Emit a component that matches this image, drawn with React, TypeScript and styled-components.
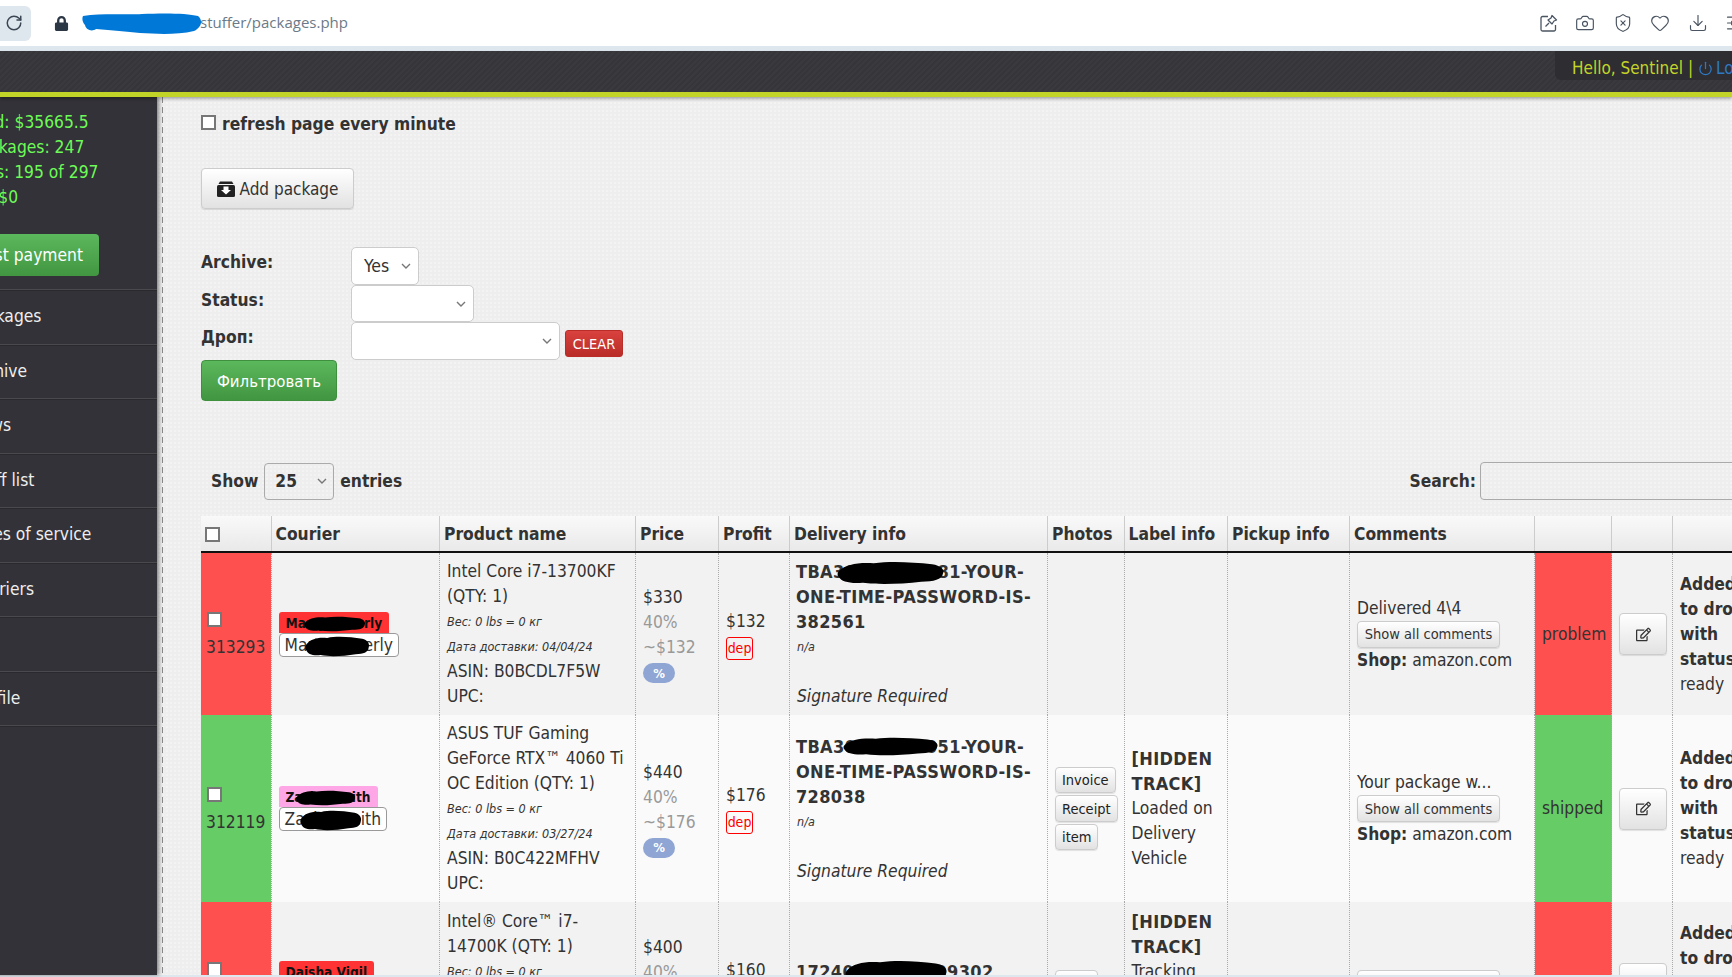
import React from 'react';
import styled, { createGlobalStyle } from 'styled-components';
import { Camera, Download, Heart, Power, RotateCw, ShieldX, SlidersHorizontal } from 'lucide-react';
import { FaLock, FaRegEdit } from 'react-icons/fa';

const chevron =
  "url(\"data:image/svg+xml,%3Csvg xmlns='http://www.w3.org/2000/svg' width='10' height='6' viewBox='0 0 10 6'%3E%3Cpath d='M1 1l4 4 4-4' fill='none' stroke='%23777' stroke-width='1.4'/%3E%3C/svg%3E\")";

const Global = createGlobalStyle`
  html, body {
    margin: 0;
    padding: 0;
    overflow: hidden;
  }
  body {
    font-family: "DejaVu Sans Condensed", "DejaVu Sans", sans-serif;
    font-stretch: condensed;
    font-size: 17.3px;
    line-height: 25px;
    color: #333;
  }
  button, select, input {
    font-family: inherit;
    font-stretch: inherit;
  }
`;

const Screen = styled.div`
  width: 1732px;
  height: 977px;
  display: flex;
  flex-direction: column;
  overflow: hidden;
  background: #fff;
`;

const BrowserBar = styled.div`
  height: 46px;
  flex: none;
  display: flex;
  align-items: center;
  background: #fff;
  border-bottom: 5px solid #dfe7ee;
`;

const ReloadButton = styled.div`
  width: 31px;
  height: 35px;
  display: flex;
  align-items: center;
  justify-content: center;
  padding-right: 3px;
  box-sizing: border-box;
  background: #dfe7ee;
  border-radius: 0 6px 6px 0;
  color: #3b4754;
`;

const LockIcon = styled.div`
  margin-left: 23px;
  display: flex;
  color: #2c3745;
`;

const UrlBox = styled.div`
  position: relative;
  margin-left: 13px;
  padding-left: 118px;
  margin-top: -2px;
  font-family: "Open Sans", sans-serif;
  font-stretch: normal;
  font-size: 15px;
  color: #6b7a88;
`;

const UrlScribble = styled.svg`
  position: absolute;
  left: 0;
  top: 3px;
`;

const BrowserTools = styled.div`
  margin-left: auto;
  margin-right: -13px;
  display: flex;
  align-items: center;
  gap: 17.5px;
  color: #4a5561;
`;

const Header = styled.div`
  height: 41px;
  flex: none;
  display: flex;
  justify-content: flex-end;
  align-items: flex-start;
  background: repeating-linear-gradient(135deg, #36353a 0 2px, #3a393e 2px 4px);
  border-bottom: 5px solid #c3d429;
  box-shadow: 0 2px 3px rgba(0, 0, 0, 0.3);
  position: relative;
  z-index: 2;
`;

const HelloBox = styled.div`
  width: 177px;
  height: 29px;
  flex: none;
  box-sizing: border-box;
  padding: 5px 0 0 17px;
  display: flex;
  align-items: center;
  gap: 5px;
  white-space: nowrap;
  overflow: hidden;
  background: #2e2d31;
  border-radius: 0 0 0 6px;
  color: #c3d429;
  font-size: 17px;
`;

const LogoutLink = styled.span`
  display: inline-flex;
  align-items: center;
  gap: 3px;
  color: #2f78c4;
`;

const Body = styled.div`
  flex: 1;
  min-height: 0;
  display: flex;
`;

const Sidebar = styled.aside`
  width: 188px;
  margin-left: -31px;
  flex: none;
  box-sizing: border-box;
  padding-top: 13px;
  background: #333238;
  box-shadow: 2px 0 4px rgba(0, 0, 0, 0.45);
  position: relative;
  z-index: 1;
`;

const Stat = styled.div`
  padding-left: 3px;
  color: #6dfb57;
  white-space: nowrap;
`;

const PaymentButton = styled.div`
  width: 130px;
  height: 42px;
  margin: 24px 0 13px;
  display: flex;
  align-items: center;
  justify-content: flex-end;
  padding-right: 16px;
  box-sizing: border-box;
  white-space: nowrap;
  color: #fff;
  background: linear-gradient(#5cb85c, #419641);
  border-radius: 0 4px 4px 0;
`;

const NavItem = styled.div<{ $indent?: number }>`
  height: 54.5px;
  box-sizing: border-box;
  padding-left: ${(p) => p.$indent ?? 0}px;
  border-top: 1px solid #4a494e;
  box-shadow: inset 0 1px 0 #2a292d;
  display: flex;
  align-items: center;
  color: #eee;
  white-space: nowrap;
`;

const Main = styled.main`
  flex: 1;
  min-width: 0;
  padding-left: 5px;
  overflow: hidden;
  background-color: #eeeeee;
  background-image: radial-gradient(#f3f3f3 1px, transparent 1.2px);
  background-size: 4px 4px;
`;

const Content = styled.div`
  width: 1571px;
  height: 100%;
  padding-left: 39px;
  background: linear-gradient(#8a8a8a 60%, transparent 60%) left top / 1px 10px repeat-y;
`;

const RefreshRow = styled.label`
  height: 25px;
  padding-top: 15px;
  display: flex;
  align-items: center;
  gap: 6px;
  font-weight: 700;
`;

const Check = styled.input.attrs({ type: 'checkbox' })`
  appearance: none;
  display: block;
  width: 15px;
  height: 15px;
  margin: 0;
  background: #fff;
  border: 2px solid #777;
  box-sizing: border-box;
`;

const RefreshCheck = styled(Check)`
  margin-top: -4px;
`;

const GreyButton = styled.button`
  display: inline-flex;
  align-items: center;
  justify-content: center;
  box-sizing: border-box;
  padding: 0 8px;
  color: #333;
  font-size: 16px;
  background: linear-gradient(#fff, #e2e2e2);
  border: 1px solid #ccc;
  border-radius: 4px;
  box-shadow: 0 1px 1px rgba(0, 0, 0, 0.1);
`;

const AddButton = styled(GreyButton)`
  width: 153px;
  height: 41px;
  margin-top: 31px;
  gap: 5px;
  font-size: 17px;
`;

const FilterGrid = styled.div`
  margin-top: 38px;
  display: grid;
  grid-template-columns: 150px 1fr;
`;

const FilterLabel = styled.div`
  padding-top: 3px;
  font-weight: 700;
`;

const FilterControls = styled.div`
  display: flex;
  align-items: flex-end;
  gap: 5px;
`;

const Select = styled.select<{ $width: number; $height?: number }>`
  appearance: none;
  width: ${(p) => p.$width}px;
  height: ${(p) => p.$height ?? 37}px;
  padding: 0 12px;
  color: #333;
  font-size: 17.5px;
  background: #fff ${chevron} no-repeat right 7px center;
  border: 1px solid #ccc;
  border-radius: 5px;
`;

const ClearButton = styled.button`
  width: 58px;
  height: 27px;
  margin-bottom: 3px;
  padding: 0;
  color: #fff;
  font-size: 14.5px;
  background: linear-gradient(#d9423e, #b92c28);
  border: 1px solid #b92c28;
  border-radius: 3px;
`;

const FilterButton = styled.button`
  display: block;
  width: 136px;
  height: 41px;
  padding: 0;
  color: #fff;
  font-size: 16.7px;
  background: linear-gradient(#5cb85c, #419641);
  border: 1px solid #3e8f3e;
  border-radius: 4px;
`;

const EntriesRow = styled.div`
  margin-top: 61px;
  height: 38px;
  display: flex;
  align-items: center;
  padding-left: 10px;
  gap: 6px;
  font-weight: 700;
`;

const EntriesSelect = styled.select`
  appearance: none;
  width: 70px;
  height: 37px;
  padding: 0 10px;
  color: #333;
  font-size: 17.3px;
  font-weight: 700;
  background: transparent ${chevron} no-repeat right 6px center;
  border: 1px solid #aaa;
  border-radius: 4px;
`;

const SearchLabel = styled.span`
  margin-left: auto;
  margin-right: -2px;
`;

const SearchInput = styled.input`
  width: 292px;
  height: 38px;
  box-sizing: border-box;
  background: transparent;
  border: 1px solid #aaa;
  border-radius: 4px;
`;

const Table = styled.table`
  margin-top: 16px;
  width: 1571px;
  table-layout: fixed;
  border-collapse: collapse;
`;

const HeadCell = styled.th`
  height: 34px;
  padding: 1px 4px 0;
  text-align: left;
  font-weight: 700;
  background: linear-gradient(#f9f9f9, #e9e9e9);
  border-right: 1px solid #ccc;
  border-bottom: 2px solid #111;
  white-space: nowrap;
`;

const Row = styled.tr<{ $height: number; $odd: boolean }>`
  height: ${(p) => p.$height}px;
  background: ${(p) => (p.$odd ? '#f2f2f2' : '#fafafa')};
`;

const Cell = styled.td<{ $tone?: string }>`
  padding: 0 7px;
  vertical-align: middle;
  border-right: 1px dotted #aaa;
  background: ${(p) => p.$tone ?? 'transparent'};
`;

const IdBlock = styled.div`
  padding-top: 4px;
  display: flex;
  flex-direction: column;
  gap: 8px;
  margin-left: -1px;
`;

const IdNumber = styled.div`
  margin-left: -1px;
`;

const CourierTag = styled.div<{ $color: string }>`
  position: relative;
  width: fit-content;
  height: 21px;
  padding: 0 7px;
  font-size: 13.6px;
  line-height: 22px;
  font-weight: 700;
  white-space: nowrap;
  color: #111;
  background: ${(p) => p.$color};
  border-radius: 3px 3px 0 0;
`;

const CourierName = styled.div`
  position: relative;
  width: fit-content;
  height: 24px;
  box-sizing: border-box;
  padding: 0 5px;
  line-height: 23px;
  white-space: nowrap;
  background: #fff;
  border: 1px solid #999;
  border-radius: 4px;
`;

const Blot = styled.svg<{ $x: number; $y: number }>`
  position: absolute;
  left: ${(p) => p.$x}px;
  top: ${(p) => p.$y}px;
`;

const Small = styled.div`
  font-size: 12.5px;
  font-style: italic;
`;

const Faded = styled.div`
  color: #999;
`;

const PercentPill = styled.div`
  width: 32px;
  height: 20px;
  margin-top: 3px;
  display: flex;
  align-items: center;
  justify-content: center;
  color: #fff;
  font-size: 13px;
  font-weight: 700;
  background: #8fa5d3;
  border-radius: 10px;
`;

const DepBadge = styled.div`
  width: 27px;
  height: 23px;
  margin-top: 3px;
  box-sizing: border-box;
  color: #f00;
  font-size: 14px;
  line-height: 21px;
  text-align: center;
  border: 1px solid #f00;
  border-radius: 3px;
`;

const TrackCode = styled.div`
  position: relative;
  margin-left: -1px;
  font-size: 18px;
  letter-spacing: 0.35px;
  font-weight: 700;
`;

const Signature = styled.div`
  margin-top: 25px;
  font-style: italic;
`;

const PhotoStack = styled.div`
  display: flex;
  flex-direction: column;
  align-items: flex-start;
  gap: 2px;
`;

const PhotoButton = styled(GreyButton)`
  height: 26.5px;
  padding: 0 6px;
  color: #222;
  font-size: 14.5px;
`;

const HiddenTrack = styled.div`
  font-size: 18px;
  letter-spacing: 0.35px;
  font-weight: 700;
`;

const CommentsButton = styled(GreyButton)`
  width: 143px;
  height: 27px;
  padding: 0;
  font-size: 14.5px;
`;

const EditButton = styled(GreyButton)`
  width: 48px;
  height: 42px;
  padding: 0;
`;

const AddedNote = styled.div`
  width: 66px;
  font-weight: 700;
`;

const BottomStrip = styled.div`
  height: 2px;
  flex: none;
  background: #dfe7ee;
`;

const blotPath = 'M2 9C8 3 20 1 34 2C50 0 70 1 88 3C96 4 100 8 98 12C97 17 90 19 78 19C60 21 40 22 24 20C12 21 4 19 2 15C0 13 0 11 2 9Z';

type BlotBox = { x: number; y: number; w: number; h: number };

const Scribble = ({ x, y, w, h }: BlotBox) => (
  <Blot $x={x} $y={y} width={w} height={h} viewBox="0 0 100 22" preserveAspectRatio="none">
    <path d={blotPath} fill="#000" />
  </Blot>
);

const ArchiveIcon = () => (
  <svg width="18" height="16" viewBox="0 0 18 16">
    <path d="M3 0.5H15L16.5 3H1.5Z" fill="#222" />
    <rect x="0" y="4" width="18" height="12" rx="1.5" fill="#222" />
    <path d="M6.5 5.5H11.5V9H14L9 13.5L4 9H6.5Z" fill="#fff" />
  </svg>
);

const PinEditIcon = () => (
  <svg width="18" height="18" viewBox="0 0 18 18" fill="none" stroke="currentColor" strokeWidth="1.3" strokeLinejoin="round">
    <path d="M8 2.5H2.5A1.5 1.5 0 0 0 1 4V15.5A1.5 1.5 0 0 0 2.5 17H14A1.5 1.5 0 0 0 15.5 15.5V11" />
    <path d="M12 1.5L16.5 6L14 7L12 10L8 6L11 4ZM9 9L5.5 12.5" />
  </svg>
);

const columns = [
  { title: '', width: 70 },
  { title: 'Courier', width: 168.5 },
  { title: 'Product name', width: 196 },
  { title: 'Price', width: 83 },
  { title: 'Profit', width: 71 },
  { title: 'Delivery info', width: 258 },
  { title: 'Photos', width: 76.5 },
  { title: 'Label info', width: 103.5 },
  { title: 'Pickup info', width: 122 },
  { title: 'Comments', width: 185 },
  { title: '', width: 77 },
  { title: '', width: 61 },
  { title: '', width: 99 },
];

const RED = '#ff5050';
const GREEN = '#66cc66';

type Pack = {
  id: string;
  height: number;
  tone: string;
  tagColor: string;
  name: string;
  tagBlot?: BlotBox;
  nameBlot?: BlotBox;
  product: string;
  date: string;
  asin: string;
  price: string;
  profit: string;
  percentPrice: string;
  code: string;
  codeBlot: BlotBox;
  signature: boolean;
  photos: string[];
  trackState?: string;
  comment?: string;
  shop: boolean;
  status: string;
};

const packs: Pack[] = [
  {
    id: '313293',
    height: 163,
    tone: RED,
    tagColor: '#ff3333',
    name: 'Marty Beverly',
    tagBlot: { x: 25, y: 4, w: 62, h: 16 },
    nameBlot: { x: 25, y: 2, w: 65, h: 21 },
    product: 'Intel Core i7-13700KF (QTY: 1)',
    date: '04/04/24',
    asin: 'B0BCDL7F5W',
    price: '$330',
    profit: '$132',
    percentPrice: '~$132',
    code: 'TBA30000000081-YOUR-ONE-TIME-PASSWORD-IS-382561',
    codeBlot: { x: 41, y: 2, w: 108, h: 24 },
    signature: true,
    photos: [],
    comment: 'Delivered 4\\4',
    shop: true,
    status: 'problem',
  },
  {
    id: '312119',
    height: 187,
    tone: GREEN,
    tagColor: '#ffa6e6',
    name: 'Zacky Smith',
    tagBlot: { x: 17, y: 4, w: 60, h: 16 },
    nameBlot: { x: 20, y: 2, w: 62, h: 21 },
    product: 'ASUS TUF Gaming GeForce RTX™ 4060 Ti OC Edition (QTY: 1)',
    date: '03/27/24',
    asin: 'B0C422MFHV',
    price: '$440',
    profit: '$176',
    percentPrice: '~$176',
    code: 'TBA30000000051-YOUR-ONE-TIME-PASSWORD-IS-728038',
    codeBlot: { x: 47, y: 3, w: 96, h: 19 },
    signature: true,
    photos: ['Invoice', 'Receipt', 'item'],
    trackState: 'Loaded on Delivery Vehicle',
    comment: 'Your package w...',
    shop: true,
    status: 'shipped',
  },
  {
    id: '311874',
    height: 163,
    tone: RED,
    tagColor: '#ff3333',
    name: 'Daisha Vigil',
    product: 'Intel® Core™ i7-14700K (QTY: 1)',
    date: '03/30/24',
    asin: 'B0CGJDKLB8',
    price: '$400',
    profit: '$160',
    percentPrice: '~$160',
    code: '17240000000009302',
    codeBlot: { x: 49, y: 1, w: 103, h: 25 },
    signature: false,
    photos: ['item'],
    trackState: 'Tracking number assigned by carrier',
    shop: false,
    status: 'problem',
  },
];

const PackRow = ({ pack, odd }: { pack: Pack; odd: boolean }) => (
  <Row $height={pack.height} $odd={odd}>
    <Cell $tone={pack.tone}>
      <IdBlock>
        <Check />
        <IdNumber>{pack.id}</IdNumber>
      </IdBlock>
    </Cell>
    <Cell>
      <CourierTag $color={pack.tagColor}>
        {pack.name}
        {pack.tagBlot && <Scribble {...pack.tagBlot} />}
      </CourierTag>
      <CourierName>
        {pack.name}
        {pack.nameBlot && <Scribble {...pack.nameBlot} />}
      </CourierName>
    </Cell>
    <Cell>
      <div>{pack.product}</div>
      <Small>Вес: 0 lbs = 0 кг</Small>
      <Small>Дата доставки: {pack.date}</Small>
      <div>ASIN: {pack.asin}</div>
      <div>UPC:</div>
    </Cell>
    <Cell>
      <div>{pack.price}</div>
      <Faded>40%</Faded>
      <Faded>{pack.percentPrice}</Faded>
      <PercentPill>%</PercentPill>
    </Cell>
    <Cell>
      <div>{pack.profit}</div>
      <DepBadge>dep</DepBadge>
    </Cell>
    <Cell>
      <TrackCode>
        {pack.code}
        <Scribble {...pack.codeBlot} />
      </TrackCode>
      <Small>n/a</Small>
      {pack.signature && <Signature>Signature Required</Signature>}
    </Cell>
    <Cell>
      <PhotoStack>
        {pack.photos.map((photo) => (
          <PhotoButton key={photo}>{photo}</PhotoButton>
        ))}
      </PhotoStack>
    </Cell>
    <Cell>
      {pack.trackState && (
        <>
          <HiddenTrack>[HIDDEN TRACK]</HiddenTrack>
          <div>{pack.trackState}</div>
        </>
      )}
    </Cell>
    <Cell />
    <Cell>
      {pack.comment && <div>{pack.comment}</div>}
      <CommentsButton>Show all comments</CommentsButton>
      {pack.shop && (
        <div>
          <strong>Shop:</strong> amazon.com
        </div>
      )}
    </Cell>
    <Cell $tone={pack.tone}>{pack.status}</Cell>
    <Cell>
      <EditButton>
        <FaRegEdit size={15} />
      </EditButton>
    </Cell>
    <Cell>
      <AddedNote>Added to drop with status</AddedNote>
      <div>ready</div>
    </Cell>
  </Row>
);

export default function App() {
  return (
    <Screen>
      <Global />
      <BrowserBar>
        <ReloadButton>
          <RotateCw size={18} />
        </ReloadButton>
        <LockIcon>
          <FaLock size={15} />
        </LockIcon>
        <UrlBox>
          <UrlScribble width="120" height="22" viewBox="0 0 120 22">
            <path d="M1 3C20 0 45 2 60 1C80 0 105 0 116 3C121 7 120 14 112 18C95 22 75 21 58 20C45 19 30 17 14 16C10 19 4 17 3 12C0 9 0 5 1 3Z" fill="#0078d7" />
          </UrlScribble>
          stuffer/packages.php
        </UrlBox>
        <BrowserTools>
          <PinEditIcon />
          <Camera size={20} strokeWidth={1.4} />
          <ShieldX size={20} strokeWidth={1.4} />
          <Heart size={20} strokeWidth={1.4} />
          <Download size={20} strokeWidth={1.4} />
          <SlidersHorizontal size={20} strokeWidth={1.4} />
        </BrowserTools>
      </BrowserBar>
      <Header>
        <HelloBox>
          Hello, Sentinel <span>|</span>
          <LogoutLink>
            <Power size={15} />
            Logout
          </LogoutLink>
        </HelloBox>
      </Header>
      <Body>
        <Sidebar>
          <Stat>Paid: $35665.5</Stat>
          <Stat>Packages: 247</Stat>
          <Stat>Lots: 195 of 297</Stat>
          <Stat>To: $0</Stat>
          <PaymentButton>Request payment</PaymentButton>
          <NavItem>Packages</NavItem>
          <NavItem>Archive</NavItem>
          <NavItem>News</NavItem>
          <NavItem>Tariff list</NavItem>
          <NavItem>Rules of service</NavItem>
          <NavItem>Couriers</NavItem>
          <NavItem />
          <NavItem $indent={3}>Profile</NavItem>
          <NavItem />
        </Sidebar>
        <Main>
          <Content>
            <RefreshRow>
              <RefreshCheck />
              refresh page every minute
            </RefreshRow>
            <AddButton>
              <ArchiveIcon />
              Add package
            </AddButton>
            <FilterGrid>
              <FilterLabel>Archive:</FilterLabel>
              <FilterControls>
                <Select $width={68} $height={38} defaultValue="Yes">
                  <option>Yes</option>
                  <option>No</option>
                </Select>
              </FilterControls>
              <FilterLabel>Status:</FilterLabel>
              <FilterControls>
                <Select $width={123}>
                  <option />
                </Select>
              </FilterControls>
              <FilterLabel>Дроп:</FilterLabel>
              <FilterControls>
                <Select $width={209} $height={38}>
                  <option />
                </Select>
                <ClearButton>CLEAR</ClearButton>
              </FilterControls>
            </FilterGrid>
            <FilterButton>Фильтровать</FilterButton>
            <EntriesRow>
              Show
              <EntriesSelect defaultValue="25">
                <option>25</option>
              </EntriesSelect>
              entries
              <SearchLabel>Search:</SearchLabel>
              <SearchInput />
            </EntriesRow>
            <Table>
              <colgroup>
                {columns.map((col, i) => (
                  <col key={i} style={{ width: col.width }} />
                ))}
              </colgroup>
              <thead>
                <tr>
                  {columns.map((col, i) => (
                    <HeadCell key={i}>{i === 0 ? <Check /> : col.title}</HeadCell>
                  ))}
                </tr>
              </thead>
              <tbody>
                {packs.map((pack, i) => (
                  <PackRow key={pack.id} pack={pack} odd={i % 2 === 0} />
                ))}
              </tbody>
            </Table>
          </Content>
        </Main>
      </Body>
      <BottomStrip />
    </Screen>
  );
}
